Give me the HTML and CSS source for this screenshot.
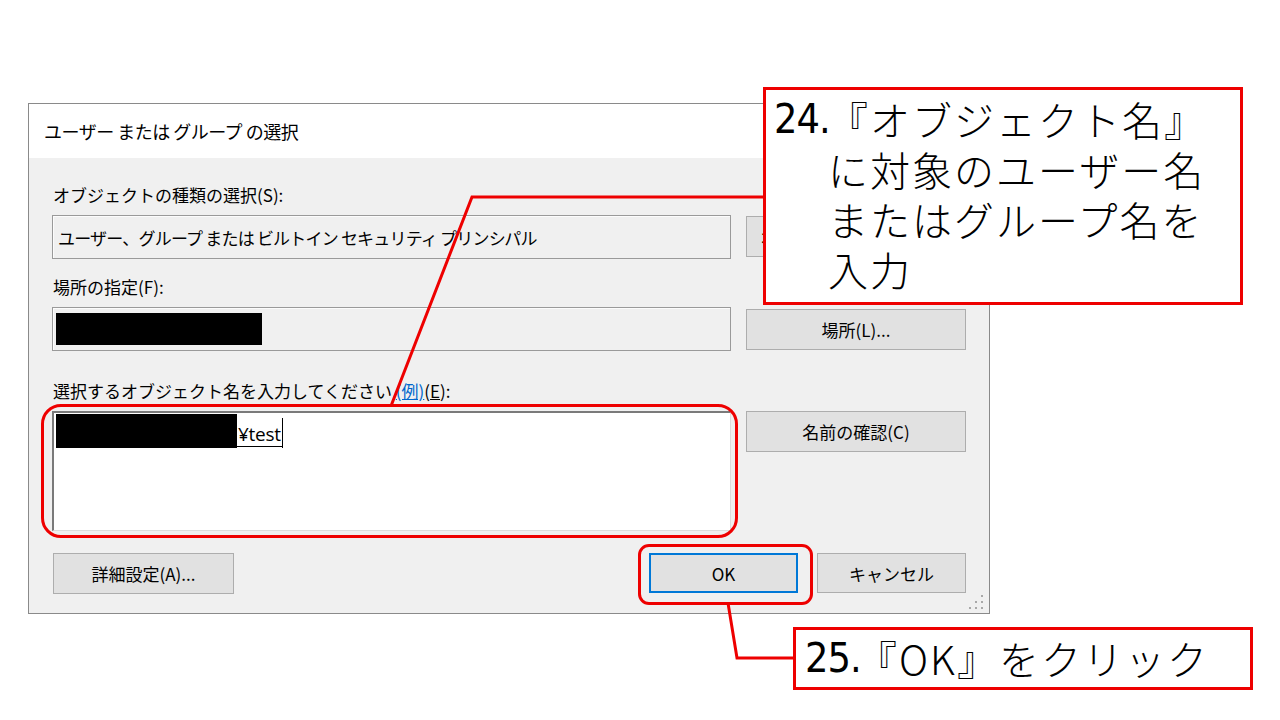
FILE: index.html
```html
<!DOCTYPE html>
<html lang="ja">
<head>
    <meta charset="UTF-8">
    <title>ユーザー または グループ の選択</title>
    <link rel="stylesheet" href="styles.css">
</head>
<body>
    <div class="stage">
        <div class="dialog">
            <div class="titlebar">ユーザー または グループ の選択</div>
            <div class="dialog-body">
                <div class="section">
                    <div class="label">オブジェクトの種類の選択(S):</div>
                    <div class="row">
                        <div class="field">ユーザー、グループ または ビルトイン セキュリティ プリンシパル</div>
                        <div class="btn btn-side mt1">オブジェクトの種類(O)...</div>
                    </div>
                </div>
                <div class="section mt18">
                    <div class="label">場所の指定(F):</div>
                    <div class="row">
                        <div class="field"><span class="mask mask-place"></span></div>
                        <div class="btn btn-side mt2">場所(L)...</div>
                    </div>
                </div>
                <div class="section mt30">
                    <div class="label">選択するオブジェクト名を入力してください <span class="link">(例)</span>(<u>E</u>):</div>
                    <div class="row">
                        <div class="names">
                            <span class="mask mask-name"></span><span class="typed">¥test</span><span class="caret"></span>
                        </div>
                        <div class="btn btn-side">名前の確認(C)</div>
                    </div>
                </div>
                <div class="footer">
                    <div class="btn btn-advanced">詳細設定(A)...</div>
                    <div class="footer-right">
                        <div class="btn btn-small btn-default">OK</div>
                        <div class="btn btn-small">キャンセル</div>
                    </div>
                </div>
            </div>
            <!-- サイズ変更グリップ -->
            <svg class="grip" width="16" height="16" viewBox="0 0 16 16">
                <rect x="12" y="1" width="2" height="2" fill="#a8a8a8"/>
                <rect x="6" y="7" width="2" height="2" fill="#a8a8a8"/>
                <rect x="12" y="7" width="2" height="2" fill="#a8a8a8"/>
                <rect x="0" y="13" width="2" height="2" fill="#a8a8a8"/>
                <rect x="6" y="13" width="2" height="2" fill="#a8a8a8"/>
                <rect x="12" y="13" width="2" height="2" fill="#a8a8a8"/>
            </svg>
        </div>
    </div>

    <!-- 赤枠 -->
    <div class="highlight highlight-names"></div>
    <div class="highlight highlight-ok"></div>

    <svg class="connectors" width="1280" height="720" viewBox="0 0 1280 720">
        <polyline points="764,197 472,197 391,406" fill="none" stroke="#ee0000" stroke-width="3"/>
        <polyline points="728,603 737,658 794,658" fill="none" stroke="#ee0000" stroke-width="3"/>
    </svg>

    <div class="callout callout-24">
        <span class="num">24.</span>
        <div class="callout-text">『オブジェクト名』<br>に対象のユーザー名<br>またはグループ名を<br>入力</div>
    </div>
    <div class="callout callout-25">
        <span class="num">25.</span>
        <div class="callout-text">『OK』をクリック</div>
    </div>
</body>
</html>
```

FILE: styles.css
```css
body {
    margin: 0;
    width: 1280px;
    height: 720px;
    background: #fff;
    position: relative;
    overflow: hidden;
    font-family: "Noto Sans CJK JP", "Noto Sans", sans-serif;
    color: #000;
}
.stage {
    padding: 103px 0 0 28px;
}
.dialog {
    position: relative;
    width: 962px;
    height: 511px;
    box-sizing: border-box;
    border: 1px solid #8a8a8a;
    display: flex;
    flex-direction: column;
}
.titlebar {
    height: 54px;
    background: #fff;
    padding-left: 15px;
    display: flex;
    align-items: center;
    font-size: 18px;
    letter-spacing: -0.5px;
}
.dialog-body {
    flex: 1;
    background: #f0f0f0;
    padding: 27px 23px 0 23px;
}
.label {
    height: 20px;
    line-height: 20px;
    font-size: 17px;
    margin-bottom: 10px;
    white-space: nowrap;
    padding-left: 1px;
}
.link {
    color: #0066cc;
    text-decoration: underline;
}
.row {
    display: flex;
    align-items: flex-start;
    gap: 15px;
}
.mt1 { margin-top: 1px; }
.mt2 { margin-top: 2px; }
.mt18 { margin-top: 18px; }
.mt30 { margin-top: 30px; }

.field {
    width: 679px;
    height: 44px;
    box-sizing: border-box;
    border: 1px solid #9a9a9a;
    box-shadow: inset 1px 1px 0 #fcfcfc;
    background: #f0f0f0;
    display: flex;
    align-items: center;
    padding-left: 5px;
    font-size: 17px;
    letter-spacing: -0.8px;
    white-space: pre;
    overflow: hidden;
}
.mask {
    display: block;
    background: #000;
}
.mask-place {
    width: 206px;
    height: 32px;
    margin-left: -2px;
}
.names {
    width: 679px;
    height: 120px;
    box-sizing: border-box;
    background: #fff;
    border-top: 2px solid #7a7a7a;
    border-left: 2px solid #7a7a7a;
    border-right: 1px solid #dcdcdc;
    border-bottom: 1px solid #dcdcdc;
    display: flex;
    align-items: flex-start;
    padding: 1px 0 0 2px;
}
.mask-name {
    width: 181px;
    height: 34px;
}
.typed {
    font-family: "Open Sans", "Noto Sans", sans-serif;
    font-size: 19px;
    line-height: 24px;
    margin-top: 8px;
    padding: 0 1px;
    border-bottom: 1px solid #000;
    letter-spacing: -0.3px;
}
.caret {
    width: 1px;
    height: 30px;
    margin-top: 4px;
    background: #000;
}

.btn {
    box-sizing: border-box;
    background: #e1e1e1;
    border: 1px solid #adadad;
    display: flex;
    align-items: center;
    justify-content: center;
    font-size: 17px;
    white-space: nowrap;
    overflow: hidden;
}
.btn-side {
    width: 220px;
    height: 41px;
}
.footer {
    margin-top: 22px;
    display: flex;
    justify-content: space-between;
}
.btn-advanced {
    width: 181px;
    height: 41px;
    margin-left: 1px;
}
.footer-right {
    display: flex;
    gap: 19px;
}
.btn-small {
    width: 149px;
    height: 40px;
}
.btn-default {
    border: 2px solid #0078d7;
}
.grip {
    position: absolute;
    right: 4px;
    bottom: 3px;
}

.highlight {
    position: absolute;
    box-sizing: border-box;
    border: 3px solid #ee0000;
}
.highlight-names {
    left: 41px;
    top: 404px;
    width: 697px;
    height: 134px;
    border-radius: 20px;
}
.highlight-ok {
    left: 638px;
    top: 544px;
    width: 175px;
    height: 61px;
    border-radius: 11px;
}
.connectors {
    position: absolute;
    left: 0;
    top: 0;
    pointer-events: none;
}

.callout {
    position: absolute;
    box-sizing: border-box;
    background: #fff;
    border: 3px solid #ee0000;
    display: flex;
    align-items: flex-start;
    font-size: 40px;
    line-height: 50px;
    font-weight: 300;
    white-space: nowrap;
}
.callout .num {
    font-family: "Liberation Sans Narrow", "DejaVu Sans Condensed", "Open Sans", sans-serif;
    font-weight: 400;
    font-size: 41px;
    letter-spacing: -1px;
}
.callout-text {
    letter-spacing: 2px;
}
.callout-24 {
    left: 763px;
    top: 87px;
    width: 480px;
    height: 218px;
    padding: 4px 0 0 8px;
}
.callout-24 .num {
    width: 54px;
}
.callout-25 {
    left: 793px;
    top: 627px;
    width: 460px;
    height: 63px;
    padding: 3px 0 0 9px;
}
.callout-25 .num {
    width: 52px;
}
```
